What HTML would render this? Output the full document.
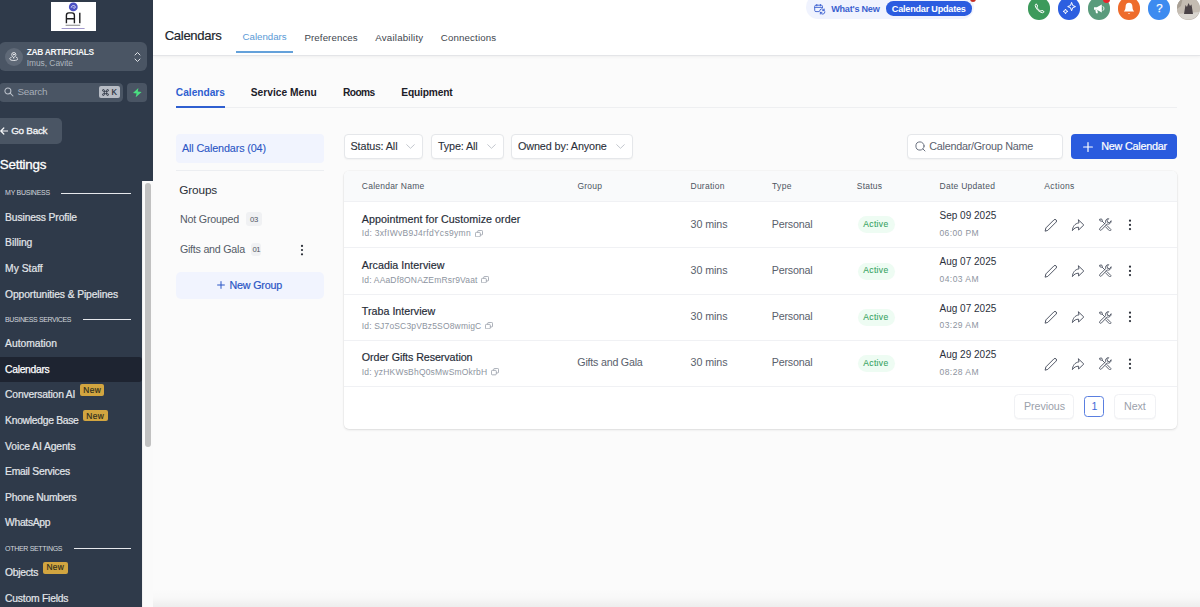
<!DOCTYPE html>
<html>
<head>
<meta charset="utf-8">
<title>Calendars</title>
<style>
*{box-sizing:border-box;margin:0;padding:0}
html,body{width:1200px;height:607px;overflow:hidden;background:#fbfbfb;font-family:"Liberation Sans",sans-serif}
.abs{position:absolute}
.t{position:absolute;white-space:nowrap;line-height:1;font-family:"Liberation Sans",sans-serif}
#side{position:absolute;left:0;top:0;width:153px;height:607px;background:#2f3a4a;overflow:hidden}
.hl{position:absolute;height:1px;background:#e6e8ec}
.new{position:absolute;background:#d2a540;height:11.6px;border-radius:2px}
.pill{position:absolute;background:#4a5564}
#top{position:absolute;left:153px;top:0;width:1047px;height:55.5px;background:#fff;border-bottom:1px solid #e4e5e8;box-shadow:0 1px 3px rgba(0,0,0,.05)}
.circ{position:absolute;width:22.6px;height:22.6px;border-radius:50%;top:-3px;overflow:hidden}
.sel{position:absolute;top:133.8px;height:25px;background:#fff;border:1px solid #e5e7ea;border-radius:4px;box-shadow:0 1px 1.5px rgba(0,0,0,.04)}
.rowline{position:absolute;left:344px;width:833px;height:1px;background:#f0f1f4}
.act{position:absolute}

</style>
</head>
<body>
<!-- SIDEBAR -->
<div id="side">
  <!-- logo -->
  <div class="abs" style="left:51px;top:2px;width:45px;height:29px;background:#fff"></div>
  <svg class="abs" style="left:51px;top:2px" width="45" height="29" viewBox="0 0 45 29">
    <circle cx="22.300" cy="4.900" r="4.400" fill="#4b50c4"/><path d="M20.200 5.600C20.200 3.400 23.800 2.800 24.300 4.800C24.600 6.300 22.300 6.800 22 5.400" fill="none" stroke="#e4e6fb" stroke-width="1"/>
    <path d="M15.400 21.300V13.400A2.500 2.500 0 0 1 17.900 10.900H20.900A2.500 2.500 0 0 1 23.400 13.400V21.300M15.400 16.800H23.400M28.800 10.700V21.300" fill="none" stroke="#1d1d1f" stroke-width="1.400"/>
    <rect x="14.600" y="22.700" width="14.600" height="1.200" fill="#9a9a9a"/><rect x="10.600" y="26" width="23" height=".8" fill="#8a7fc0"/>
  </svg>
  <!-- account card -->
  <div class="pill" style="left:-1.5px;top:42px;width:148.5px;height:29px;border-radius:6px"></div>
  <div class="abs" style="left:4.6px;top:47.8px;width:18.2px;height:18.2px;border-radius:50%;background:#5f6977"></div>
  <svg class="abs" style="left:8.9px;top:52.2px" width="9.6" height="9.2" viewBox="0 0 11 10.5" fill="none" stroke="#f4f5f7" stroke-width="1" stroke-linecap="round" stroke-linejoin="round">
    <path d="M5.5 6.6C7 5.2 7.9 4.2 7.9 3A2.4 2.4 0 0 0 3.100 3C3.1 4.2 4 5.2 5.5 6.6Z"/><circle cx="5.5" cy="3" r=".5" fill="#f4f5f7"/>
    <path d="M2.6 6.1C1.4 6.5.8 7.1.8 7.700C.8 8.900 2.900 9.700 5.500 9.700S10.200 8.900 10.200 7.700C10.200 7.100 9.600 6.500 8.400 6.100"/>
  </svg>
  <svg class="abs" style="left:134px;top:50.500px" width="7" height="12" viewBox="0 0 7 12" fill="none" stroke="#dfe2e7" stroke-width="1" stroke-linecap="round" stroke-linejoin="round"><path d="M1 4L3.500 1.500L6 4M1 8L3.500 10.500L6 8"/></svg>
  <!-- search -->
  <div class="pill" style="left:-1.5px;top:83px;width:124.5px;height:18.500px;border-radius:4.5px"></div>
  <svg class="abs" style="left:3.800px;top:87.300px" width="10" height="10" viewBox="0 0 10 10" fill="none" stroke="#bcc2cb" stroke-width="1.050" stroke-linecap="round"><circle cx="3.900" cy="3.900" r="3"/><path d="M6.200 6.200L9 9"/></svg>
  <div class="abs" style="left:99px;top:86.300px;width:21px;height:11.600px;background:#b7bcc5;border-radius:2px"></div>
  <svg class="abs" style="left:102px;top:88.600px" width="7" height="7" viewBox="0 0 7 7" fill="none" stroke="#222a38" stroke-width=".8"><path d="M2.300 2.300H4.700V4.700H2.300ZM2.300 2.300V1.400A.9.900 0 1 0 1.400 2.300ZM4.700 2.300H5.600A.9.900 0 1 0 4.700 1.400ZM4.700 4.700V5.600A.9.900 0 1 0 5.600 4.700ZM2.300 4.700H1.400A.9.900 0 1 0 2.300 5.600Z"/></svg>
  <div class="pill" style="left:127px;top:83px;width:20.300px;height:18.500px;border-radius:4px"></div>
  <svg class="abs" style="left:132px;top:87.6px" width="10.4" height="9.4" viewBox="0 0 10.4 9.4"><path d="M6.4 0L1 5.1L4.6 5.5L3.6 9.4L9.6 3.9L5.8 3.5Z" fill="#4ade80"/></svg>
  <!-- go back -->
  <div class="pill" style="left:-4px;top:118.300px;width:66px;height:25.500px;border-radius:5px"></div>
  <svg class="abs" style="left:-.5px;top:127px" width="8.500" height="8" viewBox="0 0 8.500 8" fill="none" stroke="#f5f6f8" stroke-width="1.200" stroke-linecap="round" stroke-linejoin="round"><path d="M7.800 4H.8M3.800 1L.8 4L3.800 7"/></svg>
  <!-- section lines -->
  <div class="hl" style="left:61.300px;top:192.800px;width:69.700px"></div>
  <div class="hl" style="left:83px;top:319.200px;width:48px"></div>
  <div class="hl" style="left:74px;top:548px;width:57px"></div>
  <!-- active item -->
  <div class="abs" style="left:0;top:357.300px;width:142px;height:24.800px;background:#1e2431;border-radius:0 3px 3px 0"></div>
  <!-- New badges -->
  <div class="new" style="left:79.700px;top:384px;width:24.700px"></div>
  <div class="new" style="left:82.700px;top:409.500px;width:24.900px"></div>
  <div class="new" style="left:42.700px;top:562px;width:24.900px"></div>
  <!-- scrollbar -->
  <div class="abs" style="left:142px;top:181px;width:11px;height:426px;background:#fafafa;border-left:1px solid #f0f0f0"></div>
  <div class="abs" style="left:145.200px;top:183px;width:5.800px;height:264.400px;border-radius:3px;background:#c1c1c1"></div>
</div>

<!-- TOP BAR -->
<div id="top"></div>
<div class="abs" style="left:236.300px;top:51.300px;width:56.700px;height:1.800px;background:#64a1da"></div>
<!-- what's new pill -->
<div class="abs" style="left:805.500px;top:-5px;width:168.500px;height:24px;border-radius:12px;background:#f0f3fe"></div>
<svg class="abs" style="left:813.500px;top:3.500px" width="12" height="11" viewBox="0 0 12 11" fill="none" stroke="#3a5fcf" stroke-width=".9" stroke-linecap="round" stroke-linejoin="round">
  <path d="M4.600 7.600H1.900A1.200 1.200 0 0 1 .7 6.400V2.400A1.200 1.200 0 0 1 1.900 1.200H7.300A1.200 1.200 0 0 1 8.500 2.400V3.400M.7 3.400H8.500M2.800.4V1.900M6.400.4V1.900"/>
  <path d="M5.600 7.300A2.300 2.300 0 0 1 10.100 6.500M10.900 7.700A2.300 2.300 0 0 1 6.400 8.500M10.200 5V6.600H8.600M6.300 10V8.400H7.900"/>
</svg>
<div class="abs" style="left:885.800px;top:1.300px;width:86px;height:14.600px;border-radius:7.300px;background:#2b5ce0"></div>
<div class="abs" style="left:969.500px;top:-4.200px;width:6.200px;height:6.200px;border-radius:50%;background:#c62f24"></div>
<!-- round buttons -->
<div class="circ" style="left:1027.700px;background:#3c9a5b"></div>
<svg class="abs" style="left:1033.500px;top:2.500px" width="11" height="11" viewBox="0 0 11 11" fill="none" stroke="#fff" stroke-width="1" stroke-linejoin="round"><path d="M2.300.9C1.500 1.200 1.100 2 1.300 2.900C2 6 5 9 8.100 9.700C9 9.900 9.800 9.500 10.100 8.700L8 7.300L7 8.200C5.200 7.400 3.600 5.800 2.800 4L3.700 3Z"/></svg>
<div class="circ" style="left:1057.700px;background:#2d5fe0"></div>
<svg class="abs" style="left:1062px;top:1.500px" width="14" height="14" viewBox="0 0 14 14" fill="none" stroke="#fff" stroke-width="1" stroke-linejoin="round"><path d="M9.600 .4L10.700 3.500L13.500 4.600L10.700 5.700L9.600 8.800L8.500 5.700L5.700 4.600L8.500 3.500Z"/><path d="M3.500 7L4.200 8.700L5.900 9.400L4.200 10.100L3.500 11.800L2.800 10.100L1.100 9.400L2.800 8.700Z"/></svg>
<div class="circ" style="left:1087.700px;background:#5a9b7c"></div>
<svg class="abs" style="left:1092.500px;top:2.500px" width="13" height="12" viewBox="0 0 13 12"><path d="M1 4.200H3.800L8.800 1.400V9.600L3.800 6.800H1Z" fill="#fff"/><path d="M2.300 6.800H4.300L4.900 10.200H3Z" fill="#fff"/><path d="M10.200 3.600C11.200 4.400 11.200 6.600 10.200 7.400" fill="none" stroke="#fff" stroke-width="1" stroke-linecap="round"/></svg>
<div class="abs" style="left:1102.800px;top:-3.600px;width:7px;height:7px;border-radius:50%;background:#e8252a"></div>
<div class="circ" style="left:1117.700px;background:#ee6c2c"></div>
<svg class="abs" style="left:1123px;top:1.500px" width="12" height="14" viewBox="0 0 12 14"><path d="M6 .8C3.800.8 2.600 2.500 2.600 4.600C2.600 7.400 1.600 8.600.8 9.600H11.200C10.400 8.600 9.400 7.400 9.400 4.600C9.400 2.500 8.200.8 6 .8Z" fill="#fff"/><path d="M4.800 11.200A1.300 1.300 0 0 0 7.200 11.200Z" fill="#fff"/></svg>
<div class="circ" style="left:1147.500px;background:#3d8bf0"></div>
<div class="circ" style="left:1177.200px;background:#bdb5ac"></div>
<svg class="abs" style="left:1177.200px;top:-3px" width="22.600" height="22.600" viewBox="0 0 22.600 22.600"><defs><clipPath id="av"><circle cx="11.300" cy="11.300" r="11.300"/></clipPath></defs><g clip-path="url(#av)"><rect width="23" height="23" fill="#c4bcb2"/><path d="M0 17L23 15V23H0Z" fill="#d9d5cf"/><path d="M7 17L8.500 8L10 10L11.500 6L13 9L14.500 7.500L16 17Z" fill="#4a4246"/><path d="M0 0H6L4 9L0 12Z" fill="#a89f94"/></g></svg>

<!-- SUB TABS -->
<div class="abs" style="left:176px;top:107.200px;width:1001px;height:1px;background:#eeeff1"></div>
<div class="abs" style="left:175.800px;top:106.200px;width:49.200px;height:2px;background:#2f5fd0"></div>

<!-- LEFT PANEL -->
<div class="abs" style="left:175.800px;top:133.800px;width:148.200px;height:29px;background:#f1f4fe;border-radius:4px"></div>
<div class="abs" style="left:176px;top:170px;width:148px;height:1px;background:#eceef1"></div>
<div class="abs" style="left:246.100px;top:212.400px;width:16.200px;height:13.200px;background:#f0f1f3;border-radius:3px"></div>
<div class="abs" style="left:251.200px;top:242.900px;width:10.200px;height:13.200px;background:#f0f1f3;border-radius:3px"></div>
<svg class="abs" style="left:300px;top:243.500px" width="4" height="12" viewBox="0 0 4 12" fill="#2a2e37"><circle cx="2" cy="1.900" r="1.120"/><circle cx="2" cy="6" r="1.120"/><circle cx="2" cy="10.300" r="1.120"/></svg>
<div class="abs" style="left:176.400px;top:271.700px;width:147.600px;height:27.200px;background:#f1f4fe;border-radius:5px"></div>
<svg class="abs" style="left:216.500px;top:281.200px" width="8" height="8" viewBox="0 0 8 8" stroke="#2b56c5" stroke-width="1" stroke-linecap="round"><path d="M4 .6V7.400M.6 4H7.400"/></svg>

<!-- FILTERS -->
<div class="sel" style="left:344.300px;width:79px"></div>
<div class="sel" style="left:430.500px;width:73.300px"></div>
<div class="sel" style="left:511.300px;width:121.700px"></div>
<svg class="abs" style="left:406px;top:144.200px" width="9" height="5" viewBox="0 0 9 5" fill="none" stroke="#c3c7ce" stroke-width="1" stroke-linecap="round" stroke-linejoin="round"><path d="M.7.700L4.500 4.300L8.300.7"/></svg>
<svg class="abs" style="left:486.700px;top:144.200px" width="9" height="5" viewBox="0 0 9 5" fill="none" stroke="#c3c7ce" stroke-width="1" stroke-linecap="round" stroke-linejoin="round"><path d="M.7.700L4.500 4.300L8.300.7"/></svg>
<svg class="abs" style="left:616px;top:144.200px" width="9" height="5" viewBox="0 0 9 5" fill="none" stroke="#c3c7ce" stroke-width="1" stroke-linecap="round" stroke-linejoin="round"><path d="M.7.700L4.500 4.300L8.300.7"/></svg>
<div class="sel" style="left:906.800px;width:156.500px"></div>
<svg class="abs" style="left:915.200px;top:141.200px" width="11" height="11" viewBox="0 0 11 11" fill="none" stroke="#6b7280" stroke-width="1" stroke-linecap="round"><circle cx="5" cy="5" r="4.100"/><path d="M8 8L10 10"/></svg>
<div class="abs" style="left:1071.300px;top:133.800px;width:105.700px;height:25px;background:#2a5bde;border-radius:4px"></div>
<svg class="abs" style="left:1083px;top:141.700px" width="10" height="10" viewBox="0 0 10 10" stroke="#fff" stroke-width="1.200" stroke-linecap="round"><path d="M5 .6V9.400M.6 5H9.400"/></svg>

<!-- TABLE CARD -->
<div class="abs" style="left:344px;top:171.300px;width:833px;height:258.200px;background:#fff;border-radius:5px;box-shadow:0 1px 2.5px rgba(0,0,0,.11),0 0 0 .6px rgba(0,0,0,.04)"></div>
<div class="abs" style="left:344px;top:171.300px;width:833px;height:30px;background:#f9fafb;border-radius:5px 5px 0 0"></div>
<div class="rowline" style="top:201px"></div>
<div class="rowline" style="top:247.200px"></div>
<div class="rowline" style="top:293.500px"></div>
<div class="rowline" style="top:339.700px"></div>
<div class="rowline" style="top:386px"></div>

<div class="abs" style="left:153px;top:588px;width:1047px;height:19px;background:linear-gradient(to bottom,rgba(0,0,0,0),rgba(0,0,0,.012) 50%,rgba(0,0,0,.055))"></div>
<div class="abs" style="left:857.5px;top:216.3px;width:37px;height:17px;border-radius:8.5px;background:#eefcf3"></div><svg class="abs" style="left:1044px;top:217.8px" width="14" height="14" viewBox="0 0 14 14" fill="none" stroke="#525866" stroke-width="1" stroke-linejoin="round" stroke-linecap="round"><path d="M1.200 12.800L1.900 9.900L9.900 1.900A1.550 1.550 0 0 1 12.100 4.100L4.100 12.100Z"/></svg><svg class="abs" style="left:1071.3px;top:218.9px" width="14" height="13" viewBox="0 0 14 13" fill="none" stroke="#525866" stroke-width="1" stroke-linejoin="round" stroke-linecap="round"><path d="M7.600 1L12.800 6L7.600 11V8.200C5.200 8.200 3.200 9 1.400 11.600C1.600 7.800 3.800 4.400 7.600 3.900Z"/></svg><svg class="abs" style="left:1098.6px;top:218.0px" width="13.2" height="13.2" viewBox="0 0 14 14" fill="none" stroke="#525866" stroke-width="1" stroke-linejoin="round" stroke-linecap="round"><path d="M1 1.300L2.700 1L3.600 2.600L2.600 3.600L1 2.700Z"/><path d="M3.200 3.200L6.300 6.300"/><path d="M8.400 8L12.600 12.200A1.100 1.100 0 0 1 11 13.500L7 9.400"/><path d="M12.900 3.300A3 3 0 0 1 8.700 6.300L2.600 12.700A1.150 1.150 0 0 1 .9 11L7.200 4.900A3 3 0 0 1 10.300.7L8.700 2.500L9 4.500L11 4.900Z"/></svg><svg class="abs" style="left:1128px;top:218.8px" width="4" height="12" viewBox="0 0 4 12" fill="#2a2e37"><circle cx="2" cy="1.700" r="1.100"/><circle cx="2" cy="5.900" r="1.100"/><circle cx="2" cy="10.100" r="1.100"/></svg><div class="abs" style="left:857.5px;top:262.6px;width:37px;height:17px;border-radius:8.5px;background:#eefcf3"></div><svg class="abs" style="left:1044px;top:264.1px" width="14" height="14" viewBox="0 0 14 14" fill="none" stroke="#525866" stroke-width="1" stroke-linejoin="round" stroke-linecap="round"><path d="M1.200 12.800L1.900 9.900L9.900 1.900A1.550 1.550 0 0 1 12.100 4.100L4.100 12.100Z"/></svg><svg class="abs" style="left:1071.3px;top:265.1px" width="14" height="13" viewBox="0 0 14 13" fill="none" stroke="#525866" stroke-width="1" stroke-linejoin="round" stroke-linecap="round"><path d="M7.600 1L12.800 6L7.600 11V8.200C5.200 8.200 3.200 9 1.400 11.600C1.600 7.800 3.800 4.400 7.600 3.900Z"/></svg><svg class="abs" style="left:1098.6px;top:264.2px" width="13.2" height="13.2" viewBox="0 0 14 14" fill="none" stroke="#525866" stroke-width="1" stroke-linejoin="round" stroke-linecap="round"><path d="M1 1.300L2.700 1L3.600 2.600L2.600 3.600L1 2.700Z"/><path d="M3.200 3.200L6.300 6.300"/><path d="M8.400 8L12.600 12.200A1.100 1.100 0 0 1 11 13.500L7 9.400"/><path d="M12.900 3.300A3 3 0 0 1 8.700 6.300L2.600 12.700A1.150 1.150 0 0 1 .9 11L7.200 4.900A3 3 0 0 1 10.300.7L8.700 2.500L9 4.500L11 4.900Z"/></svg><svg class="abs" style="left:1128px;top:265.1px" width="4" height="12" viewBox="0 0 4 12" fill="#2a2e37"><circle cx="2" cy="1.700" r="1.100"/><circle cx="2" cy="5.900" r="1.100"/><circle cx="2" cy="10.100" r="1.100"/></svg><div class="abs" style="left:857.5px;top:308.8px;width:37px;height:17px;border-radius:8.5px;background:#eefcf3"></div><svg class="abs" style="left:1044px;top:310.3px" width="14" height="14" viewBox="0 0 14 14" fill="none" stroke="#525866" stroke-width="1" stroke-linejoin="round" stroke-linecap="round"><path d="M1.200 12.800L1.900 9.900L9.900 1.900A1.550 1.550 0 0 1 12.100 4.100L4.100 12.100Z"/></svg><svg class="abs" style="left:1071.3px;top:311.4px" width="14" height="13" viewBox="0 0 14 13" fill="none" stroke="#525866" stroke-width="1" stroke-linejoin="round" stroke-linecap="round"><path d="M7.600 1L12.800 6L7.600 11V8.200C5.200 8.200 3.200 9 1.400 11.600C1.600 7.800 3.800 4.400 7.600 3.900Z"/></svg><svg class="abs" style="left:1098.6px;top:310.5px" width="13.2" height="13.2" viewBox="0 0 14 14" fill="none" stroke="#525866" stroke-width="1" stroke-linejoin="round" stroke-linecap="round"><path d="M1 1.300L2.700 1L3.600 2.600L2.600 3.600L1 2.700Z"/><path d="M3.200 3.200L6.300 6.300"/><path d="M8.400 8L12.600 12.200A1.100 1.100 0 0 1 11 13.500L7 9.400"/><path d="M12.900 3.300A3 3 0 0 1 8.700 6.300L2.600 12.700A1.150 1.150 0 0 1 .9 11L7.200 4.900A3 3 0 0 1 10.300.7L8.700 2.500L9 4.500L11 4.900Z"/></svg><svg class="abs" style="left:1128px;top:311.3px" width="4" height="12" viewBox="0 0 4 12" fill="#2a2e37"><circle cx="2" cy="1.700" r="1.100"/><circle cx="2" cy="5.900" r="1.100"/><circle cx="2" cy="10.100" r="1.100"/></svg><div class="abs" style="left:857.5px;top:355.1px;width:37px;height:17px;border-radius:8.5px;background:#eefcf3"></div><svg class="abs" style="left:1044px;top:356.6px" width="14" height="14" viewBox="0 0 14 14" fill="none" stroke="#525866" stroke-width="1" stroke-linejoin="round" stroke-linecap="round"><path d="M1.200 12.800L1.900 9.900L9.900 1.900A1.550 1.550 0 0 1 12.100 4.100L4.100 12.100Z"/></svg><svg class="abs" style="left:1071.3px;top:357.6px" width="14" height="13" viewBox="0 0 14 13" fill="none" stroke="#525866" stroke-width="1" stroke-linejoin="round" stroke-linecap="round"><path d="M7.600 1L12.800 6L7.600 11V8.200C5.200 8.200 3.200 9 1.400 11.600C1.600 7.800 3.800 4.400 7.600 3.900Z"/></svg><svg class="abs" style="left:1098.6px;top:356.8px" width="13.2" height="13.2" viewBox="0 0 14 14" fill="none" stroke="#525866" stroke-width="1" stroke-linejoin="round" stroke-linecap="round"><path d="M1 1.300L2.700 1L3.600 2.600L2.600 3.600L1 2.700Z"/><path d="M3.200 3.200L6.300 6.300"/><path d="M8.400 8L12.600 12.200A1.100 1.100 0 0 1 11 13.500L7 9.400"/><path d="M12.900 3.300A3 3 0 0 1 8.700 6.300L2.600 12.700A1.150 1.150 0 0 1 .9 11L7.200 4.900A3 3 0 0 1 10.300.7L8.700 2.500L9 4.500L11 4.900Z"/></svg><svg class="abs" style="left:1128px;top:357.6px" width="4" height="12" viewBox="0 0 4 12" fill="#2a2e37"><circle cx="2" cy="1.700" r="1.100"/><circle cx="2" cy="5.900" r="1.100"/><circle cx="2" cy="10.100" r="1.100"/></svg><div class="abs" style="left:1014.3px;top:394.3px;width:60px;height:24.5px;border:1px solid #f0f1f4;border-radius:4.5px;background:#fff;box-shadow:0 1px 1px rgba(0,0,0,.03)"></div>
<div class="abs" style="left:1084px;top:396px;width:20.4px;height:20.6px;border:1px solid #5a7fe0;border-radius:3.5px;background:#fff"></div>
<div class="abs" style="left:1114px;top:394.3px;width:41.700px;height:24.500px;border:1px solid #f0f1f4;border-radius:4.5px;background:#fff;box-shadow:0 1px 1px rgba(0,0,0,.03)"></div>
<svg class="abs" style="left:474.6px;top:229.6px" width="8" height="7.4" viewBox="0 0 8 7.4" fill="#fff" stroke="#8d94a0" stroke-width=".75"><rect x="2.7" y=".45" width="4.85" height="4.5" rx=".9"/><rect x=".45" y="2.35" width="4.85" height="4.5" rx=".9"/></svg><svg class="abs" style="left:481.3px;top:275.9px" width="8" height="7.4" viewBox="0 0 8 7.4" fill="#fff" stroke="#8d94a0" stroke-width=".75"><rect x="2.7" y=".45" width="4.85" height="4.5" rx=".9"/><rect x=".45" y="2.35" width="4.85" height="4.5" rx=".9"/></svg><svg class="abs" style="left:485.1px;top:322.1px" width="8" height="7.4" viewBox="0 0 8 7.4" fill="#fff" stroke="#8d94a0" stroke-width=".75"><rect x="2.7" y=".45" width="4.85" height="4.5" rx=".9"/><rect x=".45" y="2.35" width="4.85" height="4.5" rx=".9"/></svg><svg class="abs" style="left:491.0px;top:368.4px" width="8" height="7.4" viewBox="0 0 8 7.4" fill="#fff" stroke="#8d94a0" stroke-width=".75"><rect x="2.7" y=".45" width="4.85" height="4.5" rx=".9"/><rect x=".45" y="2.35" width="4.85" height="4.5" rx=".9"/></svg>
<div class="t" style="font-size:8.4px;color:#f4f5f7;font-weight:bold;letter-spacing:-0.279px;left:26.7px;top:48.00px;">ZAB ARTIFICIALS</div>
<div class="t" style="font-size:8.4px;color:#aeb5bf;letter-spacing:-0.021px;left:26.7px;top:59.00px;">Imus, Cavite</div>
<div class="t" style="font-size:9.9px;color:#a7aeb9;letter-spacing:-0.272px;left:17.5px;top:87.00px;">Search</div>
<div class="t" style="font-size:8.2px;color:#222a38;-webkit-text-stroke:0.15px #222a38;letter-spacing:0.231px;left:111.6px;top:89.00px;">K</div>
<div class="t" style="font-size:9.9px;color:#f5f6f8;-webkit-text-stroke:0.3px #f5f6f8;letter-spacing:-0.258px;left:11.2px;top:126.00px;">Go Back</div>
<div class="t" style="font-size:13.4px;color:#ffffff;-webkit-text-stroke:0.3px #ffffff;letter-spacing:-0.225px;left:-0.3px;top:158.00px;">Settings</div>
<div class="t" style="font-size:7.0px;color:#d3d7de;letter-spacing:-0.268px;left:5.1px;top:189.00px;">MY BUSINESS</div>
<div class="t" style="font-size:10.3px;color:#e3e6ea;-webkit-text-stroke:0.2px #e3e6ea;letter-spacing:-0.124px;left:5.1px;top:213.00px;">Business Profile</div>
<div class="t" style="font-size:10.3px;color:#e3e6ea;-webkit-text-stroke:0.2px #e3e6ea;letter-spacing:-0.044px;left:5.1px;top:238.00px;">Billing</div>
<div class="t" style="font-size:10.3px;color:#e3e6ea;-webkit-text-stroke:0.2px #e3e6ea;letter-spacing:0.003px;left:5.1px;top:264.00px;">My Staff</div>
<div class="t" style="font-size:10.3px;color:#e3e6ea;-webkit-text-stroke:0.2px #e3e6ea;letter-spacing:-0.111px;left:5.1px;top:290.00px;">Opportunities &amp; Pipelines</div>
<div class="t" style="font-size:10.3px;color:#e3e6ea;-webkit-text-stroke:0.2px #e3e6ea;letter-spacing:-0.020px;left:5.1px;top:339.00px;">Automation</div>
<div class="t" style="font-size:10.3px;color:#e3e6ea;-webkit-text-stroke:0.2px #e3e6ea;letter-spacing:-0.173px;left:5.1px;top:390.00px;">Conversation AI</div>
<div class="t" style="font-size:10.3px;color:#e3e6ea;-webkit-text-stroke:0.2px #e3e6ea;letter-spacing:-0.274px;left:5.1px;top:416.00px;">Knowledge Base</div>
<div class="t" style="font-size:10.3px;color:#e3e6ea;-webkit-text-stroke:0.2px #e3e6ea;letter-spacing:-0.080px;left:5.1px;top:442.00px;">Voice AI Agents</div>
<div class="t" style="font-size:10.3px;color:#e3e6ea;-webkit-text-stroke:0.2px #e3e6ea;letter-spacing:-0.237px;left:5.1px;top:467.00px;">Email Services</div>
<div class="t" style="font-size:10.3px;color:#e3e6ea;-webkit-text-stroke:0.2px #e3e6ea;letter-spacing:-0.248px;left:5.1px;top:493.00px;">Phone Numbers</div>
<div class="t" style="font-size:10.3px;color:#e3e6ea;-webkit-text-stroke:0.2px #e3e6ea;letter-spacing:-0.309px;left:5.1px;top:518.00px;">WhatsApp</div>
<div class="t" style="font-size:10.3px;color:#e3e6ea;-webkit-text-stroke:0.2px #e3e6ea;letter-spacing:-0.280px;left:5.1px;top:568.00px;">Objects</div>
<div class="t" style="font-size:10.3px;color:#e3e6ea;-webkit-text-stroke:0.2px #e3e6ea;letter-spacing:-0.209px;left:5.1px;top:594.00px;">Custom Fields</div>
<div class="t" style="font-size:10.3px;color:#ffffff;-webkit-text-stroke:0.25px #ffffff;letter-spacing:-0.287px;left:5.1px;top:365.00px;">Calendars</div>
<div class="t" style="font-size:7.0px;color:#d3d7de;letter-spacing:-0.389px;left:5.1px;top:316.00px;">BUSINESS SERVICES</div>
<div class="t" style="font-size:7.0px;color:#d3d7de;letter-spacing:-0.315px;left:5.1px;top:545.00px;">OTHER SETTINGS</div>
<div class="t" style="font-size:8.4px;color:#2a2a1c;-webkit-text-stroke:0.15px #2a2a1c;letter-spacing:0.374px;left:83.3px;top:386.00px;">New</div>
<div class="t" style="font-size:8.4px;color:#2a2a1c;-webkit-text-stroke:0.15px #2a2a1c;letter-spacing:0.374px;left:86.3px;top:412.00px;">New</div>
<div class="t" style="font-size:8.4px;color:#2a2a1c;-webkit-text-stroke:0.15px #2a2a1c;letter-spacing:0.294px;left:46.5px;top:563.00px;">New</div>
<div class="t" style="font-size:13.1px;color:#22262d;-webkit-text-stroke:0.18px #22262d;letter-spacing:-0.316px;left:164.7px;top:29.00px;">Calendars</div>
<div class="t" style="font-size:9.7px;color:#5a9ad6;letter-spacing:0.003px;left:242.5px;top:32.00px;">Calendars</div>
<div class="t" style="font-size:9.7px;color:#41464e;letter-spacing:0.092px;left:304.5px;top:33.00px;">Preferences</div>
<div class="t" style="font-size:9.7px;color:#41464e;letter-spacing:0.209px;left:375.3px;top:33.00px;">Availability</div>
<div class="t" style="font-size:9.7px;color:#41464e;letter-spacing:0.156px;left:440.8px;top:33.00px;">Connections</div>
<div class="t" style="font-size:9.1px;color:#3a5fcf;font-weight:bold;letter-spacing:-0.239px;left:831.2px;top:5.00px;">What&#x27;s New</div>
<div class="t" style="font-size:9.1px;color:#ffffff;font-weight:bold;letter-spacing:-0.215px;left:891.8px;top:5.00px;">Calendar Updates</div>
<div class="t" style="font-size:11.4px;color:#ffffff;-webkit-text-stroke:0.25px #ffffff;letter-spacing:-1.344px;left:1156.3px;top:3.00px;">?</div>
<div class="t" style="font-size:10.2px;color:#2f5fd0;font-weight:bold;letter-spacing:-0.008px;left:175.8px;top:88.00px;">Calendars</div>
<div class="t" style="font-size:10.2px;color:#1b2028;font-weight:bold;letter-spacing:0.027px;left:250.8px;top:88.00px;">Service Menu</div>
<div class="t" style="font-size:10.2px;color:#1b2028;font-weight:bold;letter-spacing:-0.562px;left:343.0px;top:88.00px;">Rooms</div>
<div class="t" style="font-size:10.2px;color:#1b2028;font-weight:bold;letter-spacing:-0.169px;left:401.3px;top:88.00px;">Equipment</div>
<div class="t" style="font-size:10.8px;color:#2b56c5;-webkit-text-stroke:0.1px #2b56c5;letter-spacing:-0.138px;left:182.0px;top:143.00px;">All Calendars (04)</div>
<div class="t" style="font-size:11.8px;color:#2a2f38;letter-spacing:-0.125px;left:179.2px;top:185.00px;">Groups</div>
<div class="t" style="font-size:10.7px;color:#555c68;letter-spacing:-0.181px;left:179.9px;top:214.00px;">Not Grouped</div>
<div class="t" style="font-size:7.7px;color:#4f5662;letter-spacing:-0.308px;left:250.0px;top:216.00px;">03</div>
<div class="t" style="font-size:10.7px;color:#555c68;letter-spacing:-0.239px;left:179.9px;top:244.00px;">Gifts and Gala</div>
<div class="t" style="font-size:7.7px;color:#4f5662;letter-spacing:-0.708px;left:252.6px;top:246.00px;">01</div>
<div class="t" style="font-size:10.7px;color:#2b56c5;-webkit-text-stroke:0.2px #2b56c5;letter-spacing:-0.196px;left:229.6px;top:280.00px;">New Group</div>
<div class="t" style="font-size:10.8px;color:#2b303a;-webkit-text-stroke:0.1px #2b303a;letter-spacing:-0.097px;left:350.5px;top:141.00px;">Status: All</div>
<div class="t" style="font-size:10.8px;color:#2b303a;-webkit-text-stroke:0.1px #2b303a;letter-spacing:-0.154px;left:438.0px;top:141.00px;">Type: All</div>
<div class="t" style="font-size:10.8px;color:#2b303a;-webkit-text-stroke:0.1px #2b303a;letter-spacing:-0.119px;left:518.0px;top:141.00px;">Owned by: Anyone</div>
<div class="t" style="font-size:10.8px;color:#5a616d;letter-spacing:-0.266px;left:929.3px;top:141.00px;">Calendar/Group Name</div>
<div class="t" style="font-size:10.8px;color:#ffffff;-webkit-text-stroke:0.2px #ffffff;letter-spacing:-0.237px;left:1101.3px;top:141.00px;">New Calendar</div>
<div class="t" style="font-size:8.5px;color:#4d5562;letter-spacing:0.237px;left:361.8px;top:182.00px;">Calendar Name</div>
<div class="t" style="font-size:8.5px;color:#4d5562;letter-spacing:0.194px;left:577.5px;top:182.00px;">Group</div>
<div class="t" style="font-size:8.5px;color:#4d5562;letter-spacing:0.248px;left:690.5px;top:182.00px;">Duration</div>
<div class="t" style="font-size:8.5px;color:#4d5562;letter-spacing:0.389px;left:772.0px;top:182.00px;">Type</div>
<div class="t" style="font-size:8.5px;color:#4d5562;letter-spacing:0.198px;left:856.8px;top:182.00px;">Status</div>
<div class="t" style="font-size:8.5px;color:#4d5562;letter-spacing:0.265px;left:939.5px;top:182.00px;">Date Updated</div>
<div class="t" style="font-size:8.5px;color:#4d5562;letter-spacing:0.358px;left:1044.3px;top:182.00px;">Actions</div>
<div class="t" style="font-size:10.7px;color:#262c37;-webkit-text-stroke:0.17px #262c37;letter-spacing:0.055px;left:361.8px;top:214.00px;">Appointment for Customize order</div>
<div class="t" style="font-size:8.5px;color:#8d94a0;letter-spacing:0.296px;left:361.8px;top:229.00px;">Id: 3xfIWvB9J4rfdYcs9ymn</div>
<div class="t" style="font-size:10.7px;color:#59606c;letter-spacing:-0.067px;left:690.5px;top:219.00px;">30 mins</div>
<div class="t" style="font-size:10.7px;color:#59606c;letter-spacing:-0.198px;left:771.8px;top:219.00px;">Personal</div>
<div class="t" style="font-size:8.5px;color:#38a463;-webkit-text-stroke:0.1px #38a463;letter-spacing:0.335px;left:863.3px;top:220.00px;">Active</div>
<div class="t" style="font-size:10.0px;color:#2b313c;letter-spacing:0.008px;left:939.5px;top:211.00px;">Sep 09 2025</div>
<div class="t" style="font-size:8.5px;color:#8d94a0;letter-spacing:0.388px;left:939.5px;top:229.00px;">06:00 PM</div>
<div class="t" style="font-size:10.7px;color:#262c37;-webkit-text-stroke:0.17px #262c37;letter-spacing:0.043px;left:361.8px;top:260.00px;">Arcadia Interview</div>
<div class="t" style="font-size:8.5px;color:#8d94a0;letter-spacing:0.165px;left:361.8px;top:276.00px;">Id: AAaDf8ONAZEmRsr9Vaat</div>
<div class="t" style="font-size:10.7px;color:#59606c;letter-spacing:-0.067px;left:690.5px;top:265.00px;">30 mins</div>
<div class="t" style="font-size:10.7px;color:#59606c;letter-spacing:-0.198px;left:771.8px;top:265.00px;">Personal</div>
<div class="t" style="font-size:8.5px;color:#38a463;-webkit-text-stroke:0.1px #38a463;letter-spacing:0.335px;left:863.3px;top:266.00px;">Active</div>
<div class="t" style="font-size:10.0px;color:#2b313c;letter-spacing:0.008px;left:939.5px;top:257.00px;">Aug 07 2025</div>
<div class="t" style="font-size:8.5px;color:#8d94a0;letter-spacing:0.450px;left:939.5px;top:275.00px;">04:03 AM</div>
<div class="t" style="font-size:10.7px;color:#262c37;-webkit-text-stroke:0.17px #262c37;letter-spacing:0.016px;left:361.8px;top:306.00px;">Traba Interview</div>
<div class="t" style="font-size:8.5px;color:#8d94a0;letter-spacing:0.160px;left:361.8px;top:322.00px;">Id: SJ7oSC3pVBz5SO8wmigC</div>
<div class="t" style="font-size:10.7px;color:#59606c;letter-spacing:-0.067px;left:690.5px;top:311.00px;">30 mins</div>
<div class="t" style="font-size:10.7px;color:#59606c;letter-spacing:-0.198px;left:771.8px;top:311.00px;">Personal</div>
<div class="t" style="font-size:8.5px;color:#38a463;-webkit-text-stroke:0.1px #38a463;letter-spacing:0.335px;left:863.3px;top:313.00px;">Active</div>
<div class="t" style="font-size:10.0px;color:#2b313c;letter-spacing:0.008px;left:939.5px;top:304.00px;">Aug 07 2025</div>
<div class="t" style="font-size:8.5px;color:#8d94a0;letter-spacing:0.450px;left:939.5px;top:321.00px;">03:29 AM</div>
<div class="t" style="font-size:10.7px;color:#262c37;-webkit-text-stroke:0.17px #262c37;letter-spacing:-0.070px;left:361.8px;top:352.00px;">Order Gifts Reservation</div>
<div class="t" style="font-size:8.5px;color:#8d94a0;letter-spacing:0.191px;left:361.8px;top:368.00px;">Id: yzHKWsBhQ0sMwSmOkrbH</div>
<div class="t" style="font-size:10.7px;color:#59606c;letter-spacing:-0.217px;left:577.3px;top:357.00px;">Gifts and Gala</div>
<div class="t" style="font-size:10.7px;color:#59606c;letter-spacing:-0.067px;left:690.5px;top:357.00px;">30 mins</div>
<div class="t" style="font-size:10.7px;color:#59606c;letter-spacing:-0.198px;left:771.8px;top:357.00px;">Personal</div>
<div class="t" style="font-size:8.5px;color:#38a463;-webkit-text-stroke:0.1px #38a463;letter-spacing:0.335px;left:863.3px;top:359.00px;">Active</div>
<div class="t" style="font-size:10.0px;color:#2b313c;letter-spacing:0.008px;left:939.5px;top:350.00px;">Aug 29 2025</div>
<div class="t" style="font-size:8.5px;color:#8d94a0;letter-spacing:0.450px;left:939.5px;top:368.00px;">08:28 AM</div>
<div class="t" style="font-size:10.7px;color:#9ba1ab;letter-spacing:-0.079px;left:1024.0px;top:401.00px;">Previous</div>
<div class="t" style="font-size:10.7px;color:#3f6ad8;letter-spacing:-0.753px;left:1091.6px;top:401.00px;">1</div>
<div class="t" style="font-size:10.7px;color:#9ba1ab;letter-spacing:-0.081px;left:1124.0px;top:401.00px;">Next</div>
</body>
</html>
